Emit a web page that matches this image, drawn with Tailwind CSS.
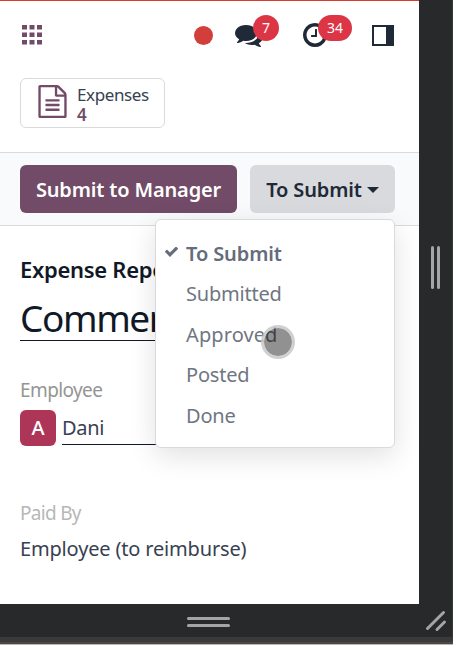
<!DOCTYPE html>
<html lang="en">
<head>
  <meta charset="UTF-8">
  <meta name="viewport" content="width=device-width, initial-scale=1.0">
  <title>Expense Report</title>
  <script src="https://cdn.jsdelivr.net/npm/@tailwindcss/browser@4"></script>
</head>
<body class="w-[453px] h-[645px] overflow-hidden bg-[#28292a] font-['Noto_Sans','Open_Sans',sans-serif] text-[#374151]">
  <div class="flex h-[604px]">
    <main class="relative w-[419px] h-full bg-white border-t border-[#d23f31] overflow-hidden">
      <!-- Navbar -->
      <header class="flex items-center h-[68px] pl-[22px] pr-[25px]">
        <svg class="size-5 text-[#714b67]" viewBox="0 0 20 20" fill="currentColor">
          <path d="M0 0h5v4.5H0zM7.5 0h5v4.5h-5zM15 0h5v4.5h-5zM0 7.5h5V12H0zM7.5 7.5h5V12h-5zM15 7.5h5V12h-5zM0 15h5v4.5H0zM7.5 15h5v4.5h-5zM15 15h5v4.5h-5z"/>
        </svg>
        <span class="ml-[152px] size-[19px] rounded-full bg-[#d23f3a]"></span>
        <div class="relative ml-[22px] size-7">
          <svg class="size-7 text-[#1f2937]" viewBox="0 0 1792 1792" fill="currentColor"><path d="M1408 768q0 139-94 257t-256.5 186.5-353.5 68.5q-86 0-176-16-124 88-278 128-36 9-86 16h-3q-11 0-20.5-8t-11.5-21q-1-3-1-6.5t.5-6.5 2-6l2.5-5 3.5-5.5 4-5 4.5-5 4-4.5q5-6 23-25t26-29.5 22.5-29 25-38.5 20.5-44q-124-72-195-177t-71-224q0-139 94-257t256.5-186.5 353.5-68.5 353.5 68.5 256.5 186.5 94 257zm384 256q0 120-71 224.5t-195 176.5q10 24 20.5 44t25 38.5 22.5 29 26 29.5 23 25q1 1 4 4.5t4.5 5 4 5 3.5 5.5l2.5 5 2 6 .5 6.5-1 6.5q-3 14-13 22t-22 7q-50-7-86-16-154-40-278-128-90 16-176 16-271 0-472-132 58 4 88 4 161 0 309-45t264-129q125-92 192-212t67-254q0-77-23-152 129 71 204 178t75 230z"/></svg>
          <span class="absolute left-[18px] -top-[6px] w-[26px] h-[26px] rounded-full bg-[#dc3545] text-white text-sm leading-[25px] text-center">7</span>
        </div>
        <div class="relative ml-[38px] size-7">
          <svg class="size-7 text-[#1f2937]" viewBox="0 0 1792 1792" fill="currentColor"><path d="M1024 544v448q0 14-9 23t-23 9h-320q-14 0-23-9t-9-23v-64q0-14 9-23t23-9h224v-352q0-14 9-23t23-9h64q14 0 23 9t9 23zm416 352q0-148-73-273t-198-198-273-73-273 73-198 198-73 273 73 273 198 198 273 73 273-73 198-198 73-273zm224 0q0 209-103 385.5t-279.5 279.5-385.5 103-385.5-103-279.5-279.5-103-385.5 103-385.5 279.5-279.5 385.5-103 385.5 103 279.5 279.5 103 385.5z"/></svg>
          <span class="absolute left-[17px] -top-[6px] w-[34px] h-[26px] rounded-full bg-[#dc3545] text-white text-sm leading-[25px] text-center">34</span>
        </div>
        <div class="ml-auto w-[22px] h-[21px] border-2 border-r-[8px] border-[#1f2937]"></div>
      </header>

      <!-- Smart button -->
      <div class="h-[83px] pl-5 pt-[9px]">
        <button class="flex items-center w-[145px] h-[50px] pl-[15px] border border-[#d8dadd] rounded-md text-left">
          <svg class="size-[33px] -mt-[3px] text-[#714b67]" viewBox="0 0 1792 1792" fill="currentColor"><path d="M1596 380q28 28 48 76t20 88v1152q0 40-28 68t-68 28h-1344q-40 0-68-28t-28-68v-1600q0-40 28-68t68-28h896q40 0 88 20t76 48zm-444-244v376h376q-10-29-22-41l-313-313q-12-12-41-22zm384 1528v-1024h-416q-40 0-68-28t-28-68v-416h-768v1536h1280zm-1024-864q0-14 9-23t23-9h704q14 0 23 9t9 23v64q0 14-9 23t-23 9h-704q-14 0-23-9t-9-23v-64zm736 224q14 0 23 9t9 23v64q0 14-9 23t-23 9h-704q-14 0-23-9t-9-23v-64q0-14 9-23t23-9h704zm0 256q14 0 23 9t9 23v64q0 14-9 23t-23 9h-704q-14 0-23-9t-9-23v-64q0-14 9-23t23-9h704z"/></svg>
          <span class="ml-2 pt-[3px] flex flex-col text-[17px] leading-5">
            <span class="tracking-[-0.4px]">Expenses</span>
            <span class="font-semibold text-[#714b67]">4</span>
          </span>
        </button>
      </div>

      <!-- Status bar -->
      <div class="flex h-[74px] px-5 pt-3 gap-[13px] bg-[#f9fafb] border-y border-[#d8dadd]">
        <button class="w-[217px] h-12 pt-[2px] rounded-md bg-[#714b67] text-white text-xl font-semibold whitespace-nowrap tracking-[-0.15px]">Submit to Manager</button>
        <button class="flex items-center justify-center gap-[5px] w-[145px] h-12 pt-px rounded-md bg-[#d8dadd] text-[#1f2937] text-xl font-semibold whitespace-nowrap tracking-[-0.15px]">
          To Submit
          <span class="border-x-[6px] border-t-[6px] border-x-transparent border-t-[#1f2937]"></span>
        </button>
      </div>

      <!-- Form -->
      <section class="px-5 pt-[29px] whitespace-nowrap">
        <div class="h-7 text-[22px] leading-7 font-semibold text-[#111827] tracking-[-0.3px]">Expense Report</div>
        <div class="mt-[10px] w-[340px] h-[48px] border-b border-[#111827] text-[37px] leading-[50px] text-[#111827] tracking-[-1.4px]">Comment</div>
        <div class="mt-[35px] h-7 text-[19px] leading-7 text-[#959595] tracking-[-0.6px]">Employee</div>
        <div class="mt-[6px] flex w-[340px] gap-[6px]">
          <span class="size-9 rounded-md bg-[#ad3658] text-white text-xl leading-9 text-center font-medium">A</span>
          <span class="flex-1 h-[35px] border-b border-[#111827] text-xl leading-9 tracking-[-0.3px]">Dani</span>
        </div>
        <div class="mt-[53px] h-7 text-[19px] leading-7 text-[#b7b7b7] tracking-[-0.7px]">Paid By</div>
        <div class="mt-2 text-xl leading-7 tracking-[-0.17px]">Employee (to reimburse)</div>
      </section>

      <!-- Status dropdown -->
      <ul class="absolute left-[155px] top-[218px] w-[240px] h-[229px] pl-[30px] pt-[13.5px] bg-white border border-[#d8dadd] rounded-md shadow-[0_8px_28px_rgba(0,0,0,0.12)] text-xl text-[#6f7682] tracking-[-0.2px]">
        <li class="relative h-[40.5px] leading-[40px] font-semibold text-[#656c7a] tracking-[-0.1px]">
          <svg class="absolute -left-[22px] top-[10.5px] size-[15px]" viewBox="0 0 1792 1792" fill="currentColor"><path d="M1671 566q0 40-28 68l-724 724-136 136q-28 28-68 28t-68-28l-136-136-362-362q-28-28-28-68t28-68l136-136q28-28 68-28t68 28l294 295 656-657q28-28 68-28t68 28l136 136q28 28 28 68z"/></svg>
          To Submit
        </li>
        <li class="h-[40.5px] leading-[40px]">Submitted</li>
        <li class="h-[40.5px] leading-[40px] tracking-[0.1px]">Approved</li>
        <li class="h-[40.5px] leading-[40px]">Posted</li>
        <li class="h-[40.5px] leading-[40px]">Done</li>
      </ul>

      <!-- Touch pointer -->
      <span class="absolute left-[261px] top-[324px] size-[34px] rounded-full bg-black/43 border-[3px] border-[#c4c4c4]/80 bg-clip-padding"></span>
    </main>

    <!-- Width handle -->
    <div class="flex flex-1 gap-[3px] pl-3 pt-[246px] border-r border-[#363738]">
      <span class="w-[3px] h-[43px] rounded-full bg-[#a5a5a5]"></span>
      <span class="w-[3px] h-[43px] rounded-full bg-[#a5a5a5]"></span>
    </div>
  </div>

  <!-- Height handle -->
  <footer class="flex h-[33px] border-r border-[#363738]">
    <div class="flex flex-col gap-1 pl-[187px] pt-[13px]">
      <span class="w-[43px] h-[3px] rounded-full bg-[#a5a5a5]"></span>
      <span class="w-[43px] h-[3px] rounded-full bg-[#a5a5a5]"></span>
    </div>
    <svg class="ml-auto mr-[5px] mt-[5px] w-[22px] h-[24px]" viewBox="0 0 22 24" fill="none" stroke="#a5a5a5" stroke-width="3" stroke-linecap="round">
      <path d="M2.5 19.5 18.5 3.5M12 20.5 19.5 13"/>
    </svg>
  </footer>
  <div class="h-[5px] bg-[#3a3a3a]"></div>
  <div class="h-[2px] bg-[#4a4746]"></div>
  <div class="h-px bg-[#c4b2a6]"></div>
</body>
</html>
